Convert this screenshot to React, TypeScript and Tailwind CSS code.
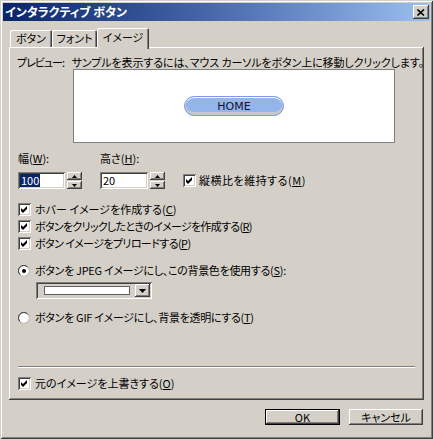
import React from 'react'

const raised =
  'shadow-[inset_-1px_-1px_0_#404040,inset_1px_1px_0_#ffffff,inset_-2px_-2px_0_#808080,inset_2px_2px_0_#d4d0c8]'
const sunken =
  'shadow-[inset_1px_1px_0_#808080,inset_-1px_-1px_0_#ffffff,inset_2px_2px_0_#404040,inset_-2px_-2px_0_#d4d0c8]'

function Check({ checked = true }: { checked?: boolean }) {
  return (
    <span className={`block h-[13px] w-[13px] shrink-0 bg-white ${sunken}`}>
      {checked ? (
        <svg width="13" height="13" viewBox="0 0 13 13" className="block">
          <polygon points="3,5 5,7 9,3 9,6 5,10 3,8" fill="#000" />
        </svg>
      ) : null}
    </span>
  )
}

function Radio({ checked }: { checked?: boolean }) {
  return (
    <svg width="12" height="12" viewBox="0 0 12 12" className="block shrink-0">
      <circle cx="6" cy="6" r="5.5" fill="#ffffff" stroke="#808080" />
      <path d="M2 9.5 A5 5 0 0 1 9.5 2" fill="none" stroke="#404040" />
      <path d="M10 2.5 A5 5 0 0 1 2.5 10" fill="none" stroke="#d4d0c8" />
      {checked ? <circle cx="6" cy="6" r="2" fill="#000" /> : null}
    </svg>
  )
}

function Key({ k }: { k: string }) {
  return (
    <>
      (<span className="underline underline-offset-1">{k}</span>)
    </>
  )
}

function Spinner() {
  return (
    <div className="ml-[2px] flex h-[17px] w-[15px] flex-col">
      <div className={`flex h-[8px] items-center justify-center bg-[#d4d0c8] ${raised}`}>
        <svg width="5" height="3" viewBox="0 0 5 3">
          <polygon points="2.5,0 5,3 0,3" fill="#000" />
        </svg>
      </div>
      <div className={`mt-[1px] flex h-[8px] items-center justify-center bg-[#d4d0c8] ${raised}`}>
        <svg width="5" height="3" viewBox="0 0 5 3">
          <polygon points="0,0 5,0 2.5,3" fill="#000" />
        </svg>
      </div>
    </div>
  )
}

function Row({ children }: { children: React.ReactNode }) {
  return <div className="ml-[9px] flex h-[17px] items-center gap-[4px] whitespace-nowrap">{children}</div>
}

export default function App() {
  return (
    <div className="flex h-[439px] w-[433px] flex-col overflow-hidden bg-[#d4d0c8] font-['Noto_Sans_CJK_JP',sans-serif] text-[11px] leading-none text-black [font-feature-settings:'palt'] shadow-[inset_1px_1px_0_#d4d0c8,inset_-1px_-1px_0_#404040,inset_2px_2px_0_#ffffff,inset_-2px_-2px_0_#808080]">
      {/* title bar */}
      <div className="ml-[3px] mt-[3px] flex h-[18px] w-[427px] items-center justify-between bg-gradient-to-r from-[#0a246a] via-[#4a6aac] to-[#9cc0f0]">
        <span className="pl-[2px] text-[12px] font-bold text-white">インタラクティブ ボタン</span>
        <div className={`mr-[1px] flex h-[14px] w-[16px] items-center justify-center bg-[#d4d0c8] ${raised}`}>
          <svg width="8" height="7" viewBox="0 0 8 7">
            <path d="M0.5 0.5 L7 6.5 M7 0.5 L0.5 6.5" stroke="#000" strokeWidth="1.6" />
          </svg>
        </div>
      </div>

      {/* tabs */}
      <div className="ml-[10px] mt-[7px] flex h-[19px] items-end">
        <div className="flex h-[17px] w-[42px] items-center justify-center rounded-t-[2px] shadow-[inset_1px_1px_0_#ffffff,inset_-1px_0_0_#404040,inset_-2px_0_0_#808080]">
          ボタン
        </div>
        <div className="flex h-[17px] w-[45px] items-center justify-center rounded-t-[2px] shadow-[inset_1px_1px_0_#ffffff,inset_-1px_0_0_#404040,inset_-2px_0_0_#808080]">
          フォント
        </div>
        <div className="relative z-10 -mb-[2px] flex h-[21px] w-[52px] items-start justify-center rounded-t-[2px] bg-[#d4d0c8] pt-[4px] shadow-[inset_1px_1px_0_#ffffff,inset_-1px_0_0_#404040,inset_-2px_0_0_#808080]">
          イメージ
        </div>
      </div>

      {/* panel */}
      <div className={`ml-[9px] flex h-[353px] w-[415px] flex-col ${raised}`}>
        <div className="ml-[8px] mt-[8px] flex h-[14px] items-center whitespace-nowrap">
          <span className="w-[56px] tracking-[-1px]">プレビュー:</span>
          <span className="tracking-[-0.1px]">サンプルを表示するには、マウス カーソルをボタン上に移動しクリックします。</span>
        </div>

        <div className="ml-[64px] flex h-[74px] w-[322px] items-center justify-center border border-[#808080] bg-white">
          <div className="flex h-[20px] w-[100px] items-center justify-center rounded-full border border-[#7c9ee0] bg-[#94b4ec] shadow-[inset_0_1px_0_#ffffff,inset_0_-3px_0_#c8c8c8] font-['DejaVu_Sans',sans-serif] text-[11px] text-[#101030]">
            HOME
          </div>
        </div>

        <div className="ml-[9px] mt-[8px] flex h-[14px] items-center">
          <span className="w-[82px]">
            幅<Key k="W" />:
          </span>
          <span>
            高さ<Key k="H" />:
          </span>
        </div>

        <div className="ml-[9px] mt-[7px] flex h-[17px] items-center">
          <div className={`flex h-[17px] w-[47px] items-center bg-white pl-[2px] ${sunken}`}>
            <span className="bg-[#0a246a] px-[1px] py-[1px] text-white">100</span>
          </div>
          <Spinner />
          <div className={`ml-[18px] flex h-[17px] w-[48px] items-center bg-white pl-[3px] ${sunken}`}>
            <span>20</span>
          </div>
          <Spinner />
          <div className="ml-[18px] flex items-center gap-[3px] whitespace-nowrap">
            <Check />
            <span className="tracking-[0.5px]">
              縦横比を維持する<Key k="M" />
            </span>
          </div>
        </div>

        <div className="mt-[12px] flex flex-col">
          <Row>
            <Check />
            <span>
              ホバー イメージを作成する<Key k="C" />
            </span>
          </Row>
          <Row>
            <Check />
            <span className="tracking-[-0.7px]">
              ボタンをクリックしたときのイメージを作成する<Key k="R" />
            </span>
          </Row>
          <Row>
            <Check />
            <span className="tracking-[-0.6px]">
              ボタン イメージをプリロードする<Key k="P" />
            </span>
          </Row>
        </div>

        <div className="mt-[10px]">
          <Row>
            <Radio checked />
            <span className="ml-[1px] tracking-[-0.3px]">
              ボタンを JPEG イメージにし、この背景色を使用する<Key k="S" />:
            </span>
          </Row>
        </div>

        <div className={`ml-[27px] mt-[3px] flex h-[17px] w-[116px] items-center bg-[#d4d0c8] p-[2px] ${sunken}`}>
          <div className="flex flex-1 items-center justify-center">
            <div className="h-[9px] w-[86px] border border-[#606060] bg-white" />
          </div>
          <div className={`flex h-[13px] w-[15px] items-center justify-center bg-[#d4d0c8] ${raised}`}>
            <svg width="7" height="4" viewBox="0 0 7 4">
              <polygon points="0,0 7,0 3.5,4" fill="#000" />
            </svg>
          </div>
        </div>

        <div className="mt-[10px]">
          <Row>
            <Radio />
            <span className="ml-[1px] tracking-[-0.3px]">
              ボタンを GIF イメージにし、背景を透明にする<Key k="T" />
            </span>
          </Row>
        </div>

        <div className="ml-[9px] mt-[40px] h-[2px] w-[397px] border-t border-b border-t-[#808080] border-b-white" />

        <div className="mt-[7px]">
          <Row>
            <Check />
            <span>
              元のイメージを上書きする<Key k="O" />
            </span>
          </Row>
        </div>
      </div>

      {/* buttons */}
      <div className="mt-[9px] flex justify-end gap-[9px] pr-[10px]">
        <div className="h-[16px] w-[75px] border border-black">
          <div className={`flex h-full w-full items-center justify-center bg-[#d4d0c8] ${raised}`}>OK</div>
        </div>
        <div className={`flex h-[16px] w-[74px] items-center justify-center bg-[#d4d0c8] ${raised}`}>
          キャンセル
        </div>
      </div>
    </div>
  )
}
